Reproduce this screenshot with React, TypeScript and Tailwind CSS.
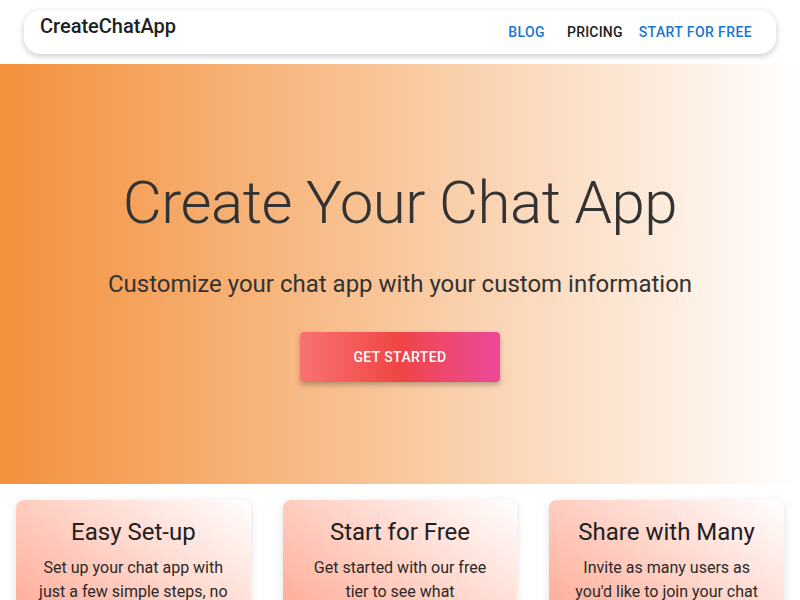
import React from 'react';

const features = [
  {
    title: 'Easy Set-up',
    body: 'Set up your chat app with just a few simple steps, no coding required.',
  },
  {
    title: 'Start for Free',
    body: 'Get started with our free tier to see what CreateChatApp can do for you.',
  },
  {
    title: 'Share with Many',
    body: "Invite as many users as you'd like to join your chat app and talk.",
  },
];

const App: React.FC = () => {
  return (
    <div className="min-h-screen bg-white font-['Roboto',sans-serif] text-[#212121]">
      {/* Nav */}
      <div className="px-6 pt-[10px] h-16">
        <nav className="flex items-start justify-between h-11 rounded-2xl bg-white pl-4 pr-4 shadow-[0_2px_6px_rgba(0,0,0,0.22)]">
          <span className="text-xl font-medium leading-8">CreateChatApp</span>
          <div className="flex items-center pt-1">
            <button className="mr-[6px] px-2 h-9 text-sm font-medium tracking-[0.4px] text-[#1976d2]">BLOG</button>
            <button className="px-2 h-9 text-sm font-medium tracking-[0.2px] text-[#212121]">PRICING</button>
            <button className="px-2 h-9 text-sm font-medium tracking-[0.4px] text-[#1976d2]">START FOR FREE</button>
          </div>
        </nav>
      </div>

      {/* Hero */}
      <section className="h-[420px] flex flex-col items-center justify-center bg-linear-to-r/srgb from-[#f3903b] to-white">
        <h1 className="text-[60px] leading-[72px] font-light tracking-[-0.5px] text-[#333]">Create Your Chat App</h1>
        <p className="mt-[29px] text-2xl leading-8 text-[#333]">
          Customize your chat app with your custom information
        </p>
        <button className="mt-8 w-[200px] h-[50px] rounded bg-gradient-to-r from-[#f87171] via-[#ef4444] to-[#ec4899] text-white text-sm font-medium tracking-[0.4px] shadow-[0_3px_5px_rgba(0,0,0,0.25)]">
          GET STARTED
        </button>
      </section>

      {/* Features */}
      <section className="grid grid-cols-3 gap-8 px-4 pt-4">
        {features.map((f) => (
          <div
            key={f.title}
            className="rounded-lg bg-linear-to-tr/srgb from-[#ff9a80] to-white px-5 pt-4 pb-6 text-center shadow-[0_2px_8px_rgba(0,0,0,0.12)]"
          >
            <h3 className="text-2xl leading-8 text-[#212121]">{f.title}</h3>
            <p className="mt-2 text-base leading-6 text-[#2a2a2a]">{f.body}</p>
          </div>
        ))}
      </section>
    </div>
  );
};

export default App;
